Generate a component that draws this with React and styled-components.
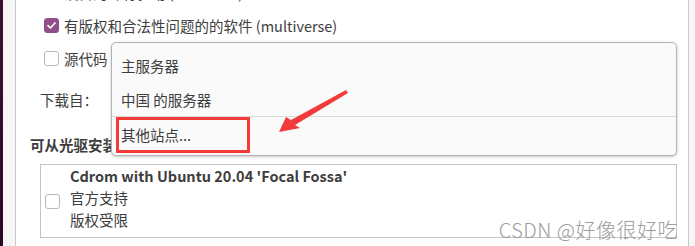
import React from 'react';
import styled, { createGlobalStyle } from 'styled-components';

const GlobalStyle = createGlobalStyle`
  body {
    margin: 0;
    background: #ffffff;
    font-family: "Noto Sans CJK SC", "Noto Sans", sans-serif;
    color: #3d3d3d;
  }
`

const Window = styled.div`
  position: relative;
  display: flex;
  width: 695px;
  height: 246px;
  overflow: hidden;
`

const DesktopEdge = styled.div`
  width: 3px;
  background: linear-gradient(180deg, #3f0d37 0%, #2c0827 100%);
`

const Gutter = styled.div`
  width: ${(p) => p.$width}px;
  background: #f6f6f6;
  border-${(p) => p.$side}: 1px solid #c9c9c9;
`

const Content = styled.div`
  flex: 1;
  display: flex;
  flex-direction: column;
  background: #ffffff;
  font-size: 14.5px;
`

const CheckRow = styled.div`
  display: flex;
  align-items: center;
  gap: 5px;
  height: 33px;
  padding-left: 28px;
  flex-shrink: 0;
  white-space: nowrap;
  &:first-child {
    margin-top: -24px;
  }
`

const Box = styled.span`
  display: inline-flex;
  align-items: center;
  justify-content: center;
  width: 15px;
  height: 15px;
  box-sizing: border-box;
  border-radius: 3px;
  flex-shrink: 0;
  border: 1px solid ${(p) => (p.$checked ? '#924d8b' : '#b8b8b8')};
  background: ${(p) => (p.$checked ? '#924d8b' : '#ffffff')};
`

const DownloadRow = styled.div`
  display: flex;
  align-items: center;
  height: 34px;
  margin-top: 7px;
  padding-left: 24px;
  flex-shrink: 0;
`

const SectionLabel = styled.div`
  height: 20px;
  line-height: 20px;
  margin-top: 19px;
  padding-left: 14px;
  font-weight: 700;
  flex-shrink: 0;
  white-space: nowrap;
`

const ListBox = styled.div`
  display: flex;
  align-items: center;
  gap: 10px;
  height: 74px;
  box-sizing: border-box;
  margin: 9px 11px 0 24px;
  padding-left: 4px;
  border: 1px solid #c4c4c4;
  flex-shrink: 0;
`

const ListText = styled.div`
  align-self: flex-start;
  display: flex;
  flex-direction: column;
  line-height: 22px;
  white-space: nowrap;
`

const ListTitle = styled.span`
  font-weight: 700;
`

const Menu = styled.div`
  position: absolute;
  left: 111px;
  top: 42px;
  width: 566px;
  box-sizing: border-box;
  padding: 5px 0 4px;
  background: #fafafa;
  border: 1px solid #b3b3b3;
  border-radius: 5px;
  box-shadow: 0 1px 3px rgba(0, 0, 0, 0.22);
  font-size: 14.5px;
`

const MenuItem = styled.div`
  display: flex;
  align-items: center;
  height: 34px;
  padding-left: 9px;
  color: #3d3d3d;
`

const Separator = styled.div`
  height: 1px;
  background: #dcdcdc;
`

const Highlight = styled.div`
  position: absolute;
  left: 116px;
  top: 117px;
  width: 134px;
  height: 36px;
  box-sizing: border-box;
  border: 3px solid #f53a3a;
`

const Arrow = styled.svg`
  position: absolute;
  left: 0;
  top: 0;
  pointer-events: none;
`

const Watermark = styled.div`
  position: absolute;
  right: 17px;
  top: 215px;
  font-size: 20px;
  font-weight: 300;
  color: #9d9d9d;
  letter-spacing: 0.5px;
  white-space: nowrap;
`

const Check = ({ checked }) => (
  <Box $checked={checked}>
    {checked && (
      <svg width="11" height="11" viewBox="0 0 11 11">
        <path d="M2 5.6 L4.4 8 L9 3" fill="none" stroke="#ffffff" strokeWidth="1.7" strokeLinecap="round" strokeLinejoin="round" />
      </svg>
    )}
  </Box>
)

const sources = [
  { label: '设备的专有驱动 (restricted)', checked: true },
  { label: '有版权和合法性问题的的软件 (multiverse)', checked: true },
  { label: '源代码', checked: false },
]

const App = () => {
  return (
    <Window>
      <GlobalStyle />
      <DesktopEdge />
      <Gutter $width={12} $side="right" />
      <Content>
        {sources.map((s) => (
          <CheckRow key={s.label}>
            <Check checked={s.checked} />
            <span>{s.label}</span>
          </CheckRow>
        ))}
        <DownloadRow>下载自：</DownloadRow>
        <SectionLabel>可从光驱安装(D)：</SectionLabel>
        <ListBox>
          <Check checked={false} />
          <ListText>
            <ListTitle>Cdrom with Ubuntu 20.04 'Focal Fossa'</ListTitle>
            <span>官方支持</span>
            <span>版权受限</span>
          </ListText>
        </ListBox>
      </Content>
      <Gutter $width={6} $side="left" />

      <Menu>
        <MenuItem>主服务器</MenuItem>
        <MenuItem>中国 的服务器</MenuItem>
        <Separator />
        <MenuItem>其他站点...</MenuItem>
      </Menu>
      <Highlight />
      <Arrow width="695" height="246" viewBox="0 0 695 246">
        <polygon points="279,132 286,117 291,120 346,90 348,93 295,125 300,128" fill="#f23b3b" />
      </Arrow>
      <Watermark>CSDN @好像很好吃</Watermark>
    </Window>
  );
}

export default App;
